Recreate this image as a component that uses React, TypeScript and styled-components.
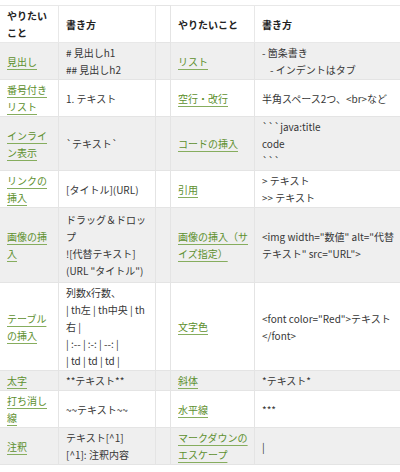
import React from 'react';
import styled, { createGlobalStyle } from 'styled-components';

const GlobalStyle = createGlobalStyle`
  html, body {
    margin: 0;
    padding: 0;
    background: #fff;
    overflow: hidden;
  }
  body {
    font-family: "Noto Sans CJK JP", "Noto Sans", sans-serif;
  }
`;

const Wrapper = styled.div`
  width: 400px;
  padding-top: 5px;
  overflow: hidden;
`;

const Table = styled.table`
  width: 402px;
  margin-left: -1px;
  border-collapse: collapse;
  table-layout: fixed;
  font-size: 10px;
  line-height: 17px;
  color: #363636;
`;

const Row = styled.tr<{ $gray?: boolean; $height?: number }>`
  background: ${(p) => (p.$gray ? '#efefef' : '#fff')};
  height: ${(p) => (p.$height ? `${p.$height}px` : 'auto')};
`;

const HeadCell = styled.th`
  padding: 1px 5px 1px 7px;
  border: 1px solid #e8e8e8;
  text-align: left;
  vertical-align: middle;
  font-weight: 700;
  color: #222;
`;

const Cell = styled.td`
  padding: 1px 5px 1px 7px;
  border: 1px solid #e4e4e4;
  vertical-align: middle;
  white-space: nowrap;
`;

const SpacerCell = styled.td`
  padding: 0;
  border: 1px solid #e4e4e4;
`;

const LinkText = styled.a`
  color: #5d8f2e;
  text-decoration: underline;
  text-decoration-color: #86ad5e;
  text-underline-offset: 3px;
  cursor: pointer;
`;

const Indent = styled.span`
  display: inline-block;
  width: 8px;
`;

interface TableRow {
  what: string[];
  how: string[];
  what2: string[];
  how2: string[];
  height?: number;
}

const rows: TableRow[] = [
  {
    what: ['見出し'],
    how: ['# 見出しh1', '## 見出しh2'],
    what2: ['リスト'],
    how2: ['- 箇条書き', '\t- インデントはタブ'],
  },
  {
    what: ['番号付き', 'リスト'],
    how: ['1. テキスト'],
    what2: ['空行・改行'],
    how2: ['半角スペース2つ、<br>など'],
  },
  {
    what: ['インライ', 'ン表示'],
    how: ['`テキスト`'],
    what2: ['コードの挿入'],
    how2: ['```java:title', 'code', '```'],
  },
  {
    what: ['リンクの', '挿入'],
    how: ['[タイトル](URL)'],
    what2: ['引用'],
    how2: ['> テキスト', '>> テキスト'],
  },
  {
    what: ['画像の挿', '入'],
    how: ['ドラッグ＆ドロッ', 'プ', '![代替テキスト]', '(URL "タイトル")'],
    what2: ['画像の挿入（サ', 'イズ指定）'],
    how2: ['<img width="数値" alt="代替', 'テキスト" src="URL">'],
    height: 75,
  },
  {
    what: ['テーブル', 'の挿入'],
    how: ['列数x行数、', '| th左 | th中央 | th', '右 |', '| :-- | :-: | --: |', '| td | td | td |'],
    what2: ['文字色'],
    how2: ['<font color="Red">テキスト', '</font>'],
  },
  {
    what: ['太字'],
    how: ['**テキスト**'],
    what2: ['斜体'],
    how2: ['*テキスト*'],
  },
  {
    what: ['打ち消し', '線'],
    how: ['~~テキスト~~'],
    what2: ['水平線'],
    how2: ['***'],
  },
  {
    what: ['注釈'],
    how: ['テキスト[^1]', '[^1]: 注釈内容'],
    what2: ['マークダウンの', 'エスケープ'],
    how2: ['|'],
  },
];

function Lines({ lines }: { lines: string[] }) {
  return (
    <>
      {lines.map((line, i) => (
        <React.Fragment key={i}>
          {i > 0 && <br />}
          {line.startsWith('\t') ? (
            <>
              <Indent />
              {line.slice(1)}
            </>
          ) : (
            line
          )}
        </React.Fragment>
      ))}
    </>
  );
}

function LinkLines({ lines }: { lines: string[] }) {
  return (
    <LinkText>
      <Lines lines={lines} />
    </LinkText>
  );
}

export default function App() {
  return (
    <Wrapper>
      <GlobalStyle />
      <Table>
        <colgroup>
          <col style={{ width: 59 }} />
          <col style={{ width: 97 }} />
          <col style={{ width: 15 }} />
          <col style={{ width: 84 }} />
          <col />
        </colgroup>
        <thead>
          <Row>
            <HeadCell>
              やりたい
              <br />
              こと
            </HeadCell>
            <HeadCell>書き方</HeadCell>
            <SpacerCell />
            <HeadCell>やりたいこと</HeadCell>
            <HeadCell>書き方</HeadCell>
          </Row>
        </thead>
        <tbody>
          {rows.map((row, i) => (
            <Row key={i} $gray={i % 2 === 0} $height={row.height}>
              <Cell>
                <LinkLines lines={row.what} />
              </Cell>
              <Cell>
                <Lines lines={row.how} />
              </Cell>
              <SpacerCell />
              <Cell>
                <LinkLines lines={row.what2} />
              </Cell>
              <Cell>
                <Lines lines={row.how2} />
              </Cell>
            </Row>
          ))}
        </tbody>
      </Table>
    </Wrapper>
  );
}
